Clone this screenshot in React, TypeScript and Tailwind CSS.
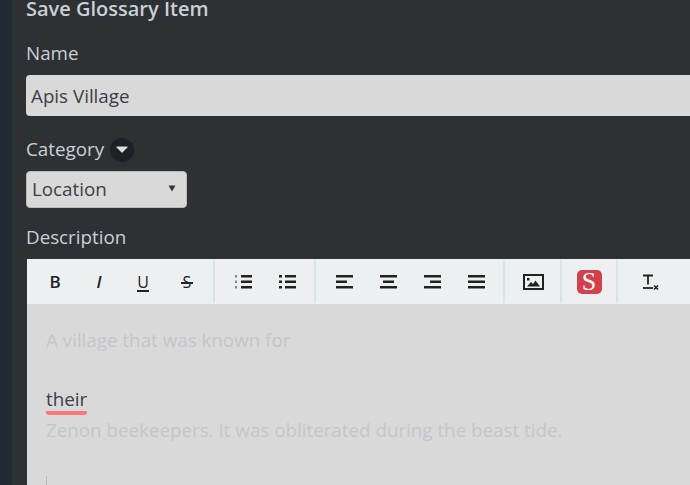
import type { ReactNode } from 'react';

function Bars({ rows }: { rows: [number, number][] }) {
    return (
        <svg width="17" height="14" viewBox="0 0 17 14" fill="#222">
            {rows.map(([x, w], i) => (
                <rect key={i} x={x} y={i * 5.5} width={w} height="2.5" />
            ))}
        </svg>
    );
}

function Btn({ children }: { children: ReactNode }) {
    return <div className="w-11 h-[45px] flex items-center justify-center text-[#222]">{children}</div>;
}

function Group({ children, className }: { children: ReactNode; className: string }) {
    return <div className={`flex items-center h-[43px] shrink-0 ${className}`}>{children}</div>;
}

function ListIcon({ ordered }: { ordered?: boolean }) {
    return (
        <svg width="17" height="14" viewBox="0 0 17 14" fill="#222">
            {[0, 5.5, 11].map((y) => (
                <g key={y}>
                    <rect x={ordered ? 0.5 : 0} y={y} width={ordered ? 1 : 3} height="2.5" />
                    <rect x="6" y={y} width="11" height="2.5" />
                </g>
            ))}
        </svg>
    );
}

export default function App() {
    return (
        <div className="w-[690px] h-[485px] overflow-hidden flex bg-[#2e3134] font-['Open_Sans',sans-serif]">
            <div className="w-[13px] shrink-0 bg-[#212a33] border-r border-[#2b343c]" />
            <div className="flex-1 min-w-0 pl-[13px]">
                <h2 className="h-[18px] leading-[18px] text-[20px] font-semibold text-[#c9d0d5]">Save Glossary Item</h2>

                <label className="block mt-[23px] h-[25px] leading-[25px] text-[18.800px] text-[#c9d0d5]">Name</label>
                <div className="mt-[9px] h-[41px] w-[700px] pl-[5px] rounded-[4px] bg-[#d9d9d9] flex items-center text-[18.800px] text-[#3b4046] pt-[1px]">
                    Apis Village
                </div>

                <div className="mt-[21px] h-[25px] flex items-center gap-[6px] text-[18.800px] text-[#c9d0d5]">
                    <span>Category</span>
                    <span className="w-6 h-6 rounded-full bg-[#1d2126] flex items-center justify-center">
                        <svg width="12" height="7" viewBox="0 0 12 7">
                            <path d="M1 1h10L6 6z" fill="#dcdcdc" stroke="#dcdcdc" strokeWidth="1.200" strokeLinejoin="round" />
                        </svg>
                    </span>
                </div>
                <div className="mt-[9px] w-[161px] h-[37px] pl-[5px] pr-[10px] rounded-[4px] bg-[#d9d9d9] border border-[#bbb] flex items-center justify-between text-[18.800px] text-[#3b4046]">
                    <span>Location</span>
                    <svg width="8" height="7" viewBox="0 0 8 7" className="-mt-[3px]"><path d="M0.500 0.500h7L4 6.500z" fill="#333" /></svg>
                </div>

                <label className="block mt-[17px] h-[25px] leading-[25px] text-[18.800px] text-[#c9d0d5]">Description</label>

                <div className="mt-[9px] ml-[1px] w-[680px]">
                    <div className="h-[45px] bg-[#ecf0f1] flex items-center">
                        <Group className="pl-[6px] w-[188px] border-r-2 border-[#dbe3e8]">
                            <Btn><span className="text-[17px] font-semibold">B</span></Btn>
                            <Btn><span className="text-[17px] font-semibold italic">I</span></Btn>
                            <Btn>
                                <span className="relative text-[16px] font-medium leading-[18px]">
                                    U
                                    <span className="absolute left-0 right-0 -bottom-[1px] h-[2px] bg-[#222]" />
                                </span>
                            </Btn>
                            <Btn>
                                <span className="relative text-[16px] font-medium leading-[18px]">
                                    S
                                    <span className="absolute -left-[2px] -right-[2px] top-[9px] h-[2px] bg-[#222]" />
                                </span>
                            </Btn>
                        </Group>
                        <Group className="pl-[6px] w-[101px] border-r-2 border-[#dbe3e8]">
                            <Btn><ListIcon ordered /></Btn>
                            <Btn><ListIcon /></Btn>
                        </Group>
                        <Group className="pl-[6px] w-[189px] border-r-2 border-[#dbe3e8]">
                            <Btn><Bars rows={[[0, 17], [0, 11], [0, 17]]} /></Btn>
                            <Btn><Bars rows={[[0, 17], [3, 11], [0, 17]]} /></Btn>
                            <Btn><Bars rows={[[0, 17], [6, 11], [0, 17]]} /></Btn>
                            <Btn><Bars rows={[[0, 17], [0, 17], [0, 17]]} /></Btn>
                        </Group>
                        <Group className="pl-[6px] w-[57px] border-r-2 border-[#dbe3e8]">
                            <Btn>
                                <svg width="21" height="16" viewBox="0 0 21 16">
                                    <rect x="1" y="1" width="19" height="14" fill="none" stroke="#222" strokeWidth="2" />
                                    <rect x="4" y="4" width="2.500" height="2.500" fill="#222" />
                                    <path d="M4 12.500l4-4.500 2 2 2.500-3.500 4.500 6z" fill="#222" />
                                </svg>
                            </Btn>
                        </Group>
                        <Group className="pl-[5px] w-[56px] border-r-2 border-[#dbe3e8]">
                            <div className="w-[44px] flex items-center justify-center">
                                <span className="w-[25px] h-[24px] rounded-[5px] bg-[#d2404c] flex items-center justify-center text-white text-[26px] leading-[24px] font-['Liberation_Serif',serif]">S</span>
                            </div>
                        </Group>
                        <Group className="pl-[10px] w-[60px]">
                            <Btn>
                                <svg width="17" height="18" viewBox="0 0 17 18" fill="none" stroke="#222" strokeWidth="1.800">
                                    <path d="M1 2.500h10M6 2.500v9" />
                                    <path d="M1 15h10" />
                                    <path d="M12 12.500l4 4M16 12.500l-4 4" strokeWidth="1.600" />
                                </svg>
                            </Btn>
                        </Group>
                    </div>
                    <div className="h-[200px] bg-[#d9d9d9] pl-[19px] pt-[21px] text-[18.800px] leading-[30px] text-[#c2c6cc]">
                        <div>A village that was known for</div>
                        <div className="h-[29px]" />
                        <div className="text-[#3a4048] w-fit border-b-[4px] border-[#f8777a] rounded-b-[3px] h-[31px] leading-[30px]">their</div>
                        <div className="leading-[30px]">Zenon beekeepers. It was obliterated during the beast tide.</div>
                        <div className="mt-[31px] w-px h-[12px] bg-[#b4bcc4]" />
                    </div>
                </div>
            </div>
        </div>
    );
}
